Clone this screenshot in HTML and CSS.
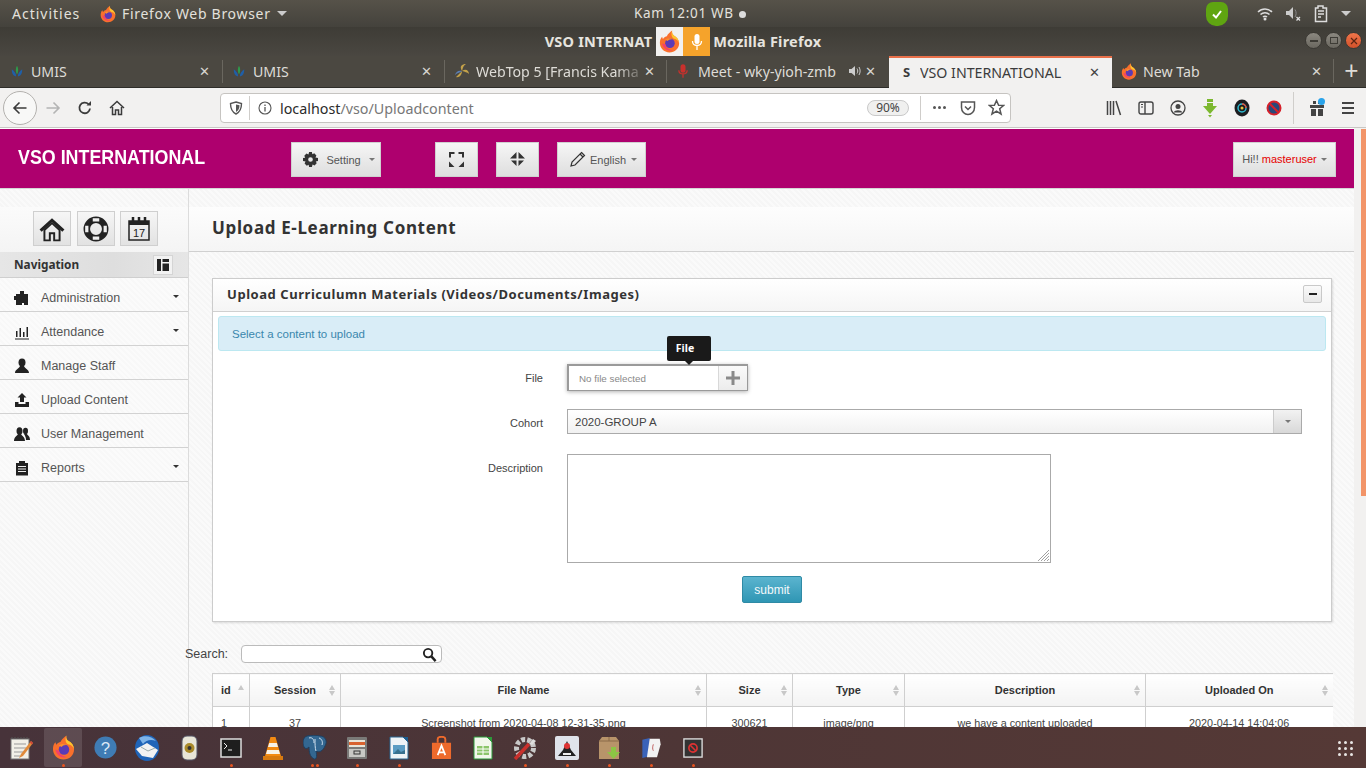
FILE: index.html
```html
<!DOCTYPE html>
<html lang="en">
<head>
    <meta charset="UTF-8">
    <title>VSO INTERNATIONAL - Mozilla Firefox</title>
    <link rel="stylesheet" href="styles.css">
</head>
<body>
    <svg class="defs" width="0" height="0">
        <defs>
            <symbol id="fox" viewBox="0 0 24 26">
                <path d="M12 25.500C5.500 25.500 1 20.500 1 14.500C1 11.500 2 9 3.500 7.500L4.500 10C6 8 7.500 7.500 9 7C10 4.500 12.500 2.500 15 .5C14.500 3 15.500 5 17 6C20.500 8 23 11 23 15C23 21 18 25.500 12 25.500Z" fill="#f9702c"/>
                <path d="M15 .5C14.500 3 15.500 5 17 6C20.500 8 23 11 23 15C22 11.500 19.500 10 16.500 9.500C14 8 13.500 4 15 .5Z" fill="#fcc52e"/>
                <circle cx="12.500" cy="15" r="5.500" fill="#5b3bb5"/>
                <path d="M7 11C9 9 13 8.500 16 10.500C13 10 11 11 10 12.500Z" fill="#fb8f2c"/>
                <path d="M3.500 15C4.500 21 10 24.500 15.500 23C11 22.500 8 20.500 7.500 16.500Z" fill="#f2416b"/>
            </symbol>
            <symbol id="umis" viewBox="0 0 16 16">
                <path d="M2 6C2 11 4 14 7 14C7 11 5 8 2 6Z" fill="#1f5fa8"/>
                <path d="M14 6C14 11 12 14 9 14C9 11 11 8 14 6Z" fill="#1f5fa8"/>
                <path d="M8 2C6 5 6.500 9 8 12C9.500 9 10 5 8 2Z" fill="#2e9a4a"/>
            </symbol>
        </defs>
    </svg>

    <div class="topbar">
        <span class="activities">Activities</span>
        <span class="appmenu">
            <svg width="16" height="18"><use href="#fox"/></svg>
            Firefox Web Browser <i class="tri"></i>
        </span>
        <span class="clock">Kam 12:01 WB <b class="dot"></b></span>
        <span class="tray">
            <span class="shield">
                <svg width="12" height="12" viewBox="0 0 12 12"><path d="M2 6.500L5 9.500L10 3" fill="none" stroke="#fff" stroke-width="2"/></svg>
            </span>
            <svg class="wifi" width="16" height="14" viewBox="0 0 16 14"><path d="M1 5C5 1 11 1 15 5M3.500 7.500C6 5 10 5 12.500 7.500M6 10C7 9 9 9 10 10" fill="none" stroke="#ddd" stroke-width="1.500"/><circle cx="8" cy="12" r="1.500" fill="#ddd"/></svg>
            <svg class="vol" width="16" height="16" viewBox="0 0 16 16"><path d="M1 5H4L8 1V13L4 9H1Z" fill="#ccc"/><path d="M10 3.500C11.500 6 11.500 8.500 10 11" stroke="#888" fill="none"/><path d="M11.500 11L15 14.500M15 11L11.500 14.500" stroke="#ddd" stroke-width="1.300"/></svg>
            <svg class="batt" width="14" height="18" viewBox="0 0 14 18"><path d="M1.500 3H4V1H9V3H12.500V16.500H1.500Z" fill="none" stroke="#ddd" stroke-width="1.500"/><path d="M4 6H10M4 9H10M4 12H7" stroke="#ddd" stroke-width="1.500"/></svg>
            <i class="tri"></i>
        </span>
    </div>

    <div class="titlebar">
        <span class="wintitle">VSO INTERNAT<span class="hidden-part">IONAL - </span>Mozilla Firefox</span>
        <span class="share">
            <span class="share-fox"><svg width="21" height="23"><use href="#fox"/></svg></span>
            <span class="share-mic">
                <svg width="12" height="18" viewBox="0 0 12 18"><rect x="3.500" y="1" width="5" height="10" rx="2.500" fill="#fff"/><path d="M1.500 8C1.500 14 10.500 14 10.500 8M6 13V17" fill="none" stroke="#fff" stroke-width="1.300"/></svg>
            </span>
        </span>
        <span class="winbtns">
            <span class="winbtn"><i class="w-min"></i></span>
            <span class="winbtn"><i class="w-max"></i></span>
            <span class="winbtn close">
                <svg width="8" height="8" viewBox="0 0 8 8"><path d="M1 1L7 7M7 1L1 7" stroke="#5a2412" stroke-width="1.200"/></svg>
            </span>
        </span>
    </div>

    <div class="tabstrip">
        <div class="tab t1"><svg width="14" height="14"><use href="#umis"/></svg><span class="tabname">UMIS</span><span class="tabx">✕</span></div>
        <div class="tab t2"><svg width="14" height="14"><use href="#umis"/></svg><span class="tabname">UMIS</span><span class="tabx">✕</span></div>
        <div class="tab t3">
            <svg width="16" height="16" viewBox="0 0 16 16"><path d="M8 8C5 3 8 1 12 1C9 3 9 5 8 8ZM8 8C12 5 15 8 15 11C13 9 11 9 8 8ZM8 8C8 12 5 15 2 14C4 12 5 11 8 8Z" fill="#c4a24a"/><path d="M8 8C4 7 2 9 1 12C3 10 5 10 8 8Z" fill="#5b7fb5"/></svg>
            <span class="tabname fade">WebTop 5 [Francis Kama</span><span class="tabx">✕</span>
        </div>
        <div class="tab t4">
            <svg width="10" height="16" viewBox="0 0 12 18"><rect x="3" y="1" width="6" height="10" rx="3" fill="#c9302c"/><path d="M1 8C1 14 11 14 11 8M6 13V17" fill="none" stroke="#c9302c" stroke-width="1.500"/></svg>
            <span class="tabname">Meet - wky-yioh-zmb</span>
            <svg class="spk" width="14" height="12" viewBox="0 0 14 12"><path d="M1 4H3.500L7 1V11L3.500 8H1Z" fill="#ccc"/><path d="M9 3.500C10 5 10 7 9 8.500M11 2C12.500 4.500 12.500 7.500 11 10" stroke="#ccc" fill="none"/></svg>
            <span class="tabx">✕</span>
        </div>
        <div class="tab active"><span class="favs">S</span><span class="tabname">VSO INTERNATIONAL</span><span class="tabx">✕</span></div>
        <div class="tab t6"><svg width="16" height="17"><use href="#fox"/></svg><span class="tabname">New Tab</span><span class="tabx">✕</span></div>
        <div class="newtab">+</div>
    </div>

    <div class="navbar">
        <span class="backbtn">
            <svg width="16" height="16" viewBox="0 0 16 16"><path d="M14.500 8H2M7.500 2.500L2 8L7.500 13.500" fill="none" stroke="#3b3b3b" stroke-width="1.600"/></svg>
        </span>
        <svg class="fwd" width="16" height="16" viewBox="0 0 16 16"><path d="M1.500 8H14M8.500 2.500L14 8L8.500 13.500" fill="none" stroke="#b4b4b4" stroke-width="1.600"/></svg>
        <svg class="reload" width="16" height="16" viewBox="0 0 16 16"><path d="M13 8.500A5.300 5.300 0 1 1 11.500 4.200" fill="none" stroke="#3b3b3b" stroke-width="1.800"/><path d="M9.500 5.500H14V1Z" fill="#3b3b3b"/></svg>
        <svg class="homeic" width="16" height="16" viewBox="0 0 16 16"><path d="M1 8L8 1.500L15 8M3.500 7V14.500H6.500V10H9.500V14.500H12.500V7" fill="none" stroke="#3b3b3b" stroke-width="1.500"/></svg>
        <div class="urlbar">
            <svg width="14" height="14" viewBox="0 0 14 14"><path d="M7 1L12.500 2.500C12.500 7.500 11 11 7 13C3 11 1.500 7.500 1.500 2.500Z" fill="none" stroke="#555" stroke-width="1.400"/><path d="M7 3.500L10.500 4.300C10.500 7.500 9.500 9.500 7 11Z" fill="#555"/></svg>
            <i class="urlsep"></i>
            <svg width="14" height="14" viewBox="0 0 14 14"><circle cx="7" cy="7" r="6" fill="none" stroke="#555" stroke-width="1.100"/><path d="M7 6V10.500M7 3.500V5" stroke="#555" stroke-width="1.300"/></svg>
            <span class="url"><em>localhost</em>/vso/Uploadcontent</span>
            <span class="zoombadge">90%</span>
            <i class="urlsep sep2"></i>
            <span class="dots"><b></b><b></b><b></b></span>
            <svg class="pocket" width="16" height="16" viewBox="0 0 16 16"><path d="M1.500 2H14.500V7.500C14.500 11.500 11.500 14.500 8 14.500C4.500 14.500 1.500 11.500 1.500 7.500Z" fill="none" stroke="#555" stroke-width="1.500"/><path d="M5 6.500L8 9.500L11 6.500" fill="none" stroke="#555" stroke-width="1.500"/></svg>
            <svg class="star" width="17" height="17" viewBox="0 0 16 16"><path d="M8 1.500L10 6H14.800L11 9.200L12.300 14.300L8 11.500L3.700 14.300L5 9.200L1.200 6H6Z" fill="none" stroke="#555" stroke-width="1.400"/></svg>
        </div>
        <div class="tools">
            <svg width="16" height="16" viewBox="0 0 16 16"><path d="M1.500 1V15M4.500 1V15M7.500 1V15M10 1L14.500 15" fill="none" stroke="#444" stroke-width="1.500"/></svg>
            <svg width="16" height="16" viewBox="0 0 16 16"><rect x="1" y="2" width="14" height="12" rx="2" fill="none" stroke="#444" stroke-width="1.400"/><path d="M7 2V14" stroke="#444" stroke-width="1.400"/><path d="M3 4.500H5M3 7H5" stroke="#444"/></svg>
            <svg width="16" height="16" viewBox="0 0 16 16"><circle cx="8" cy="8" r="7" fill="none" stroke="#444" stroke-width="1.300"/><circle cx="8" cy="6.500" r="2.500" fill="#444"/><path d="M3.500 12.500C5 9.500 11 9.500 12.500 12.500Z" fill="#444"/></svg>
            <svg width="16" height="20" viewBox="0 0 16 20"><path d="M5 1H11V4H5ZM5 5H11V8H15L8 16L1 8H5Z" fill="#7cb82f"/><path d="M6 17H10L8 19.500Z" fill="#7cb82f"/></svg>
            <svg width="16" height="18" viewBox="0 0 16 18"><ellipse cx="8" cy="9" rx="7.500" ry="8.500" fill="#1d1d20"/><circle cx="8" cy="9" r="4" fill="none" stroke="#2dbbd1" stroke-width="1.500"/><path d="M8 5A4 4 0 0 1 12 9" fill="none" stroke="#e8503a" stroke-width="1.500"/><circle cx="8" cy="9" r="1.500" fill="#e5c83d"/></svg>
            <svg width="16" height="18" viewBox="0 0 16 18"><circle cx="8" cy="9" r="6.500" fill="#28487a" stroke="#d6202a" stroke-width="2"/><path d="M3.500 4.500L12.500 13.500" stroke="#d6202a" stroke-width="2"/></svg>
        </div>
        <i class="toolsep"></i>
        <svg class="gift" width="16" height="18" viewBox="0 0 16 18"><path d="M1 6H15V9H1ZM2 10H7V17H2ZM9 10H14V17H9ZM4 2H7V5H4ZM9 2H12V5H9Z" fill="#444"/></svg>
        <i class="bluedot"></i>
        <span class="hamburger"><b></b><b></b><b></b></span>
    </div>

    <div class="viewport">
        <div class="page">
            <header class="brandbar">
                <span class="brand"><span class="brandtext">VSO INTERNATIONAL</span></span>
                <button class="hbtn setting">
                    <svg width="15" height="15" viewBox="0 0 16 16"><path fill-rule="evenodd" d="M6.500 0H9.500L10 2.300L12 1.400L14.300 3.700L13.300 5.800L16 6.500V9.500L13.700 10L14.600 12L12.300 14.300L10.200 13.300L9.500 16H6.500L6 13.700L4 14.600L1.700 12.300L2.700 10.200L0 9.500V6.500L2.300 6L1.400 4L3.700 1.700L5.800 2.700ZM8 5.500A2.500 2.500 0 1 0 8 10.500A2.500 2.500 0 1 0 8 5.500Z" fill="#333"/></svg>
                    <span>Setting</span><i class="caret"></i>
                </button>
                <button class="hbtn sq first">
                    <svg width="15" height="15" viewBox="0 0 15 15"><path d="M0 0H5.500V2H2V5.500H0ZM15 0V5.500H13V2H9.500V0ZM0 15V9.500L5.500 15ZM15 15H9.500L15 9.500Z" fill="#333"/></svg>
                </button>
                <button class="hbtn sq second">
                    <svg width="15" height="15" viewBox="0 0 15 15"><path d="M6.500 0V6.500H0ZM8.500 0L15 6.500H8.500ZM1 8.500H6.500V14ZM8.500 8.500H14L8.500 14Z" fill="#333"/></svg>
                </button>
                <button class="hbtn lang">
                    <svg width="16" height="16" viewBox="0 0 16 16"><path d="M11.500 1.500L14.500 4.500L5 14L1 15L2 11Z" fill="none" stroke="#333" stroke-width="1.200"/><path d="M10 3L13 6" stroke="#333" stroke-width="1.200"/></svg>
                    <span>English</span><i class="caret"></i>
                </button>
                <button class="hbtn user">Hi!! <span class="uname">masteruser</span><i class="caret"></i></button>
            </header>

            <div class="body-row">
                <aside class="sidebar">
                    <div class="shortcuts">
                        <button class="sbtn">
                            <svg width="26" height="26" viewBox="0 0 24 24"><path d="M12 2L0.500 12.500L2.500 14.500L12 5.500L21.500 14.500L23.500 12.500Z" fill="#222"/><path d="M5 13V22.500H10V16H14V22.500H19V13L12 6.500Z" fill="none" stroke="#222" stroke-width="1.800"/></svg>
                        </button>
                        <button class="sbtn">
                            <svg width="26" height="26" viewBox="0 0 24 24"><circle cx="12" cy="12" r="8.500" fill="none" stroke="#222" stroke-width="6"/><path d="M9 3.500H15M9 20.500H15M3.500 9V15M20.500 9V15" stroke="#eee" stroke-width="3"/></svg>
                        </button>
                        <button class="sbtn">
                            <svg width="24" height="26" viewBox="0 0 24 26"><path d="M2 5H22V24H2Z" fill="none" stroke="#222" stroke-width="1.500"/><path d="M2 5H22V9H2Z" fill="#222"/><path d="M6 1V6M12 1V6M18 1V6" stroke="#222" stroke-width="2.500"/><text x="12" y="21" font-size="11" text-anchor="middle" font-family="Liberation Sans" fill="#222">17</text></svg>
                        </button>
                    </div>
                    <div class="navhead">
                        <span>Navigation</span>
                        <span class="navtoggle">
                            <svg width="14" height="14" viewBox="0 0 14 14"><path d="M1 1H5V13H1ZM6.500 1H13V4H6.500ZM6.500 5.500H13V13H6.500Z" fill="#222"/></svg>
                        </span>
                    </div>
                    <ul class="menu">
                        <li>
                            <svg width="16" height="16" viewBox="0 0 16 16"><path d="M6 1H10V4H14V15H10V13H8V15H2V10H0V6H2V4H6Z" fill="#222"/></svg>
                            Administration<i class="mcaret"></i>
                        </li>
                        <li>
                            <svg width="16" height="16" viewBox="0 0 16 16"><path d="M2 7H3.500V13H2ZM5.500 4H7V13H5.500ZM9 8H10.500V13H9ZM12.500 3H14V13H12.500ZM1 14.500H15V15.500H1Z" fill="#222"/></svg>
                            Attendance<i class="mcaret"></i>
                        </li>
                        <li>
                            <svg width="16" height="16" viewBox="0 0 16 16"><ellipse cx="8" cy="4.500" rx="3.500" ry="4" fill="#222"/><path d="M1 15C1 11.500 5 11 6 8H10C11 11 15 11.500 15 15Z" fill="#222"/></svg>
                            Manage Staff
                        </li>
                        <li>
                            <svg width="16" height="16" viewBox="0 0 16 16"><path d="M8 1L12.500 5.500H10V10H6V5.500H3.500Z" fill="#222"/><path d="M1 10H4.500V12H11.500V10H15V15H1Z" fill="#222"/></svg>
                            Upload Content
                        </li>
                        <li>
                            <svg width="16" height="16" viewBox="0 0 16 16"><ellipse cx="5.500" cy="5" rx="3" ry="3.800" fill="#222"/><path d="M0 15C0 11 3 10 4 8H7C8 10 11 11 11 15Z" fill="#222"/><ellipse cx="11.500" cy="5" rx="2.500" ry="3.300" fill="#222"/><path d="M10 8H13C13.500 9.500 16 10 16 14H12C12 11 11 10 10 8Z" fill="#222"/></svg>
                            User Management
                        </li>
                        <li>
                            <svg width="16" height="16" viewBox="0 0 16 16"><path d="M2 3H5V1H11V3H14V15.500H2Z" fill="#222"/><path d="M4 6.500H12M4 9H12M4 11.500H12" stroke="#eee"/></svg>
                            Reports<i class="mcaret"></i>
                        </li>
                    </ul>
                </aside>

                <main class="content">
                    <div class="pagetitle"><h1>Upload E-Learning Content</h1></div>
                    <section class="box">
                        <div class="boxhead">
                            <h2>Upload Curriculumn Materials (Videos/Documents/Images)</h2>
                            <span class="collapse"><i></i></span>
                        </div>
                        <div class="boxbody">
                            <div class="notice">Select a content to upload</div>
                            <form class="form">
                                <div class="row row-file">
                                    <label>File</label>
                                    <div class="fileinput">
                                        <span class="filename">No file selected</span>
                                        <span class="fileplus"><svg width="14" height="14" viewBox="0 0 14 14"><path d="M5.500 0H8.500V5.500H14V8.500H8.500V14H5.500V8.500H0V5.500H5.500Z" fill="#8a8a8a"/></svg></span>
                                        <span class="tip">File</span>
                                    </div>
                                </div>
                                <div class="row row-cohort">
                                    <label>Cohort</label>
                                    <div class="selectbox">
                                        <span class="selval">2020-GROUP A</span>
                                        <span class="selarrow"><i class="caret"></i></span>
                                    </div>
                                </div>
                                <div class="row row-desc">
                                    <label>Description</label>
                                    <div class="areabox">
                                        <svg class="grip" width="11" height="11" viewBox="0 0 11 11"><path d="M0 11L11 0M3 11L11 3M6 11L11 6M9 11L11 9" stroke="#888" stroke-width=".8"/></svg>
                                    </div>
                                </div>
                                <div class="submitrow"><button type="button" class="submit">submit</button></div>
                            </form>
                        </div>
                    </section>

                    <div class="search">
                        <span>Search:</span>
                        <span class="searchbox">
                            <svg width="15" height="15" viewBox="0 0 16 16"><circle cx="6.500" cy="6.500" r="4.500" fill="none" stroke="#222" stroke-width="2"/><path d="M10 10L14.500 15" stroke="#222" stroke-width="2.600"/></svg>
                        </span>
                    </div>

                    <div class="tablewrap">
                        <table class="grid">
                            <colgroup>
                                <col class="c-id"><col class="c-session"><col class="c-file"><col class="c-size"><col class="c-type"><col class="c-desc"><col class="c-up">
                            </colgroup>
                            <thead>
                                <tr>
                                    <th class="left">id<i class="sort up-only"></i></th>
                                    <th>Session<i class="sort"></i></th>
                                    <th>File Name<i class="sort"></i></th>
                                    <th>Size<i class="sort"></i></th>
                                    <th>Type<i class="sort"></i></th>
                                    <th>Description<i class="sort"></i></th>
                                    <th>Uploaded On<i class="sort"></i></th>
                                </tr>
                            </thead>
                            <tbody>
                                <tr>
                                    <td class="left">1</td>
                                    <td>37</td>
                                    <td>Screenshot from 2020-04-08 12-31-35.png</td>
                                    <td>300621</td>
                                    <td>image/png</td>
                                    <td>we have a content uploaded</td>
                                    <td>2020-04-14 14:04:06</td>
                                </tr>
                            </tbody>
                        </table>
                    </div>
                </main>
            </div>
        </div>
        <div class="scrollbar"><i></i></div>
    </div>

    <div class="dock">
        <span class="app">
            <svg width="24" height="24" viewBox="0 0 24 24"><rect x="2" y="3" width="18" height="20" fill="#f2f0e8" stroke="#777"/><path d="M3 3V1M6 3V1M9 3V1M12 3V1M15 3V1M18 3V1" stroke="#555"/><path d="M5 8H17M5 12H17M5 16H14M5 20H11" stroke="#999"/><path d="M22 5L12 18L10 22L14 20L24 7Z" fill="#e08a3a"/><path d="M22 5L24 7L23 8.500L21 6.500Z" fill="#d0433a"/></svg>
        </span>
        <span class="app on"><svg width="23" height="25"><use href="#fox"/></svg><i class="pip"></i></span>
        <span class="app"><svg width="23" height="23" viewBox="0 0 26 26"><circle cx="13" cy="13" r="12.500" fill="#3f7cb5"/><text x="13" y="20" font-size="19" font-family="Liberation Sans" text-anchor="middle" fill="#dbe8f5">?</text></svg></span>
        <span class="app"><svg width="24" height="26" viewBox="0 0 24 26"><ellipse cx="12" cy="13" rx="12" ry="13" fill="#1f64b8"/><path d="M4 3C9 0 17 1 21 6C16 4 11 5 8 9Z" fill="#7fb4e8"/><path d="M1 14L12 8L23 15L18 23L7 21Z" fill="#f2f2f2"/><path d="M6 12L13 16L20 13" fill="none" stroke="#9aa"/></svg></span>
        <span class="app"><svg width="21" height="26" viewBox="0 0 21 26"><rect x="3" y="1" width="15" height="24" rx="5" fill="#e8e6d8" stroke="#556"/><circle cx="10.500" cy="13" r="5" fill="#a98a2a"/><circle cx="10.500" cy="13" r="2" fill="#333"/></svg></span>
        <span class="app"><svg width="22" height="20" viewBox="0 0 22 20"><rect x="1" y="1" width="20" height="18" fill="#1e1e1e" stroke="#ddd" stroke-width="1.500"/><path d="M4 5L7 8L4 11M8 12H12" fill="none" stroke="#eee"/></svg><i class="pip"></i></span>
        <span class="app"><svg width="20" height="24" viewBox="0 0 20 24"><path d="M7.500 1H12.500L18 20H2Z" fill="#f28a12"/><path d="M6.200 7H13.800L15 11H5ZM4.200 14H15.800L17 18H3Z" fill="#f7f2e8"/><rect x="0" y="20" width="20" height="4" fill="#d77a10"/></svg></span>
        <span class="app"><svg width="24" height="25" viewBox="0 0 24 25"><path d="M4 1C0 2 -1 8 1 12C2 14 4 14 6 12C6 17 7 22 11 24C14 25 14 20 13 16C16 18 20 16 22 11C25 6 22 1 17 1C14 0 8 0 4 1Z" fill="#336791" stroke="#1f3f5f"/><path d="M6 3C9 2 11 4 11 8M12 4C12 9 12 13 13 16M16 3C19 4 20 7 19 10" stroke="#cfdfee" fill="none"/></svg><i class="pip two"></i></span>
        <span class="app"><svg width="20" height="22" viewBox="0 0 20 22"><rect x="0" y="0" width="20" height="22" rx="1" fill="#7a7a78"/><rect x="2" y="3" width="16" height="7" fill="#e8e4d8"/><rect x="2" y="5" width="16" height="3" fill="#d8622f"/><rect x="2" y="12" width="16" height="8" fill="#c8c8c4"/><rect x="7" y="14" width="6" height="3" fill="none" stroke="#333"/></svg><i class="pip"></i></span>
        <span class="app"><svg width="20" height="24" viewBox="0 0 20 24"><path d="M1 1H14L19 6V23H1Z" fill="#eef3f7" stroke="#28648f"/><path d="M14 1L19 1V6Z" fill="#1c5c8e"/><rect x="4" y="9" width="12" height="9" fill="#5b9cc4"/><path d="M4 18L9 13L12 16L16 14V18Z" fill="#37708f"/></svg><i class="pip"></i></span>
        <span class="app"><svg width="21" height="24" viewBox="0 0 22 25"><path d="M1 7H21V24H1Z" fill="#ee6a2c"/><path d="M7 7V3C7 0 15 0 15 3V7" fill="none" stroke="#ee6a2c" stroke-width="2"/><path d="M7 20L11 10L15 20M8.500 17H13.500" fill="none" stroke="#fff" stroke-width="1.800"/></svg></span>
        <span class="app"><svg width="20" height="24" viewBox="0 0 20 24"><path d="M1 1H14L19 6V23H1Z" fill="#f2f7ec" stroke="#2c9a3a"/><path d="M14 1L19 1V6Z" fill="#2c9a3a"/><rect x="4" y="10" width="12" height="9" fill="#8cc56b"/><path d="M4 13H16M4 16H16M10 10V19" stroke="#fff"/></svg></span>
        <span class="app"><svg width="24" height="24" viewBox="0 0 24 24"><circle cx="12" cy="12" r="8.500" fill="none" stroke="#c8c8c8" stroke-width="5" stroke-dasharray="4 2"/><path d="M2 23L16 8" stroke="#c9302c" stroke-width="3.500"/><path d="M16 8L20 3L23 5L19 9Z" fill="#ddd"/></svg><i class="pip"></i></span>
        <span class="app"><svg width="24" height="24" viewBox="0 0 24 24"><rect x="0" y="0" width="24" height="24" rx="2" fill="#dfe3ea"/><path d="M12 5L16 14L21 20H3L8 14Z" fill="#222"/><circle cx="12" cy="10" r="3" fill="#d33"/><path d="M8 18H16" stroke="#eee" stroke-width="2"/></svg><i class="pip"></i></span>
        <span class="app"><svg width="23" height="24" viewBox="0 0 23 24"><path d="M1 5L4 1H18L21 5V23H1Z" fill="#b8946a"/><path d="M1 5H21M11 1V5" stroke="#8a6b48"/><path d="M13 11H18V16H22L15.500 23L9 16H13Z" fill="#8cc544"/></svg><i class="pip"></i></span>
        <span class="app"><svg width="21" height="22" viewBox="0 0 22 24"><path d="M1 3L9 1V21L1 23Z" fill="#3a62b8"/><path d="M9 2H20L21 8L17 22H6Z" fill="#f2f2f2"/><path d="M13 8C12 11 12 13 13 15" stroke="#b55" fill="none"/></svg><i class="pip"></i></span>
        <span class="app"><svg width="20" height="20" viewBox="0 0 22 22"><rect x="1" y="1" width="20" height="20" fill="#333" stroke="#ddd" stroke-width="1.500"/><circle cx="11" cy="11" r="4.500" fill="none" stroke="#d33" stroke-width="1.800"/><path d="M8 8L14 14" stroke="#d33" stroke-width="1.800"/></svg><i class="pip"></i></span>
        <span class="grid9"><b></b><b></b><b></b><b></b><b></b><b></b><b></b><b></b><b></b></span>
    </div>
</body>
</html>
```

FILE: styles.css
```css
* {
    box-sizing: border-box;
}
html, body {
    margin: 0;
    padding: 0;
    height: 100%;
    overflow: hidden;
}
body {
    width: 1366px;
    height: 768px;
    display: flex;
    flex-direction: column;
    font-family: 'Liberation Sans', Arial, sans-serif;
    background: #fff;
    position: relative;
}
.defs {
    position: absolute;
}

/* ---------- ubuntu top bar ---------- */
.topbar {
    height: 27px;
    flex: none;
    display: flex;
    align-items: center;
    position: relative;
    padding-left: 12px;
    background: linear-gradient(#565249, #44423c);
    color: #e3e1dc;
    font: 14px 'Noto Sans', sans-serif;
    letter-spacing: .7px;
}
.activities {
    width: 88px;
    letter-spacing: 1px;
}
.appmenu {
    display: flex;
    align-items: center;
    gap: 6px;
}
.tri {
    display: inline-block;
    width: 0;
    height: 0;
    border-left: 5px solid transparent;
    border-right: 5px solid transparent;
    border-top: 5px solid #ccc;
}
.clock {
    position: absolute;
    left: 634px;
    top: 4px;
    font-size: 13.5px;
    white-space: nowrap;
}
.dot {
    display: inline-block;
    width: 7px;
    height: 7px;
    margin-left: 1px;
    border-radius: 50%;
    background: #ddd;
}
.tray {
    margin-left: auto;
    display: flex;
    align-items: center;
    padding-right: 15px;
}
.shield {
    width: 22px;
    height: 24px;
    display: flex;
    align-items: center;
    justify-content: center;
    margin-right: 29px;
    border-radius: 7px 7px 10px 10px;
    background: #5fa511;
}
.vol {
    margin-left: 12px;
}
.batt {
    margin-left: 13px;
    margin-right: 13px;
}

/* ---------- window title ---------- */
.titlebar {
    height: 29px;
    flex: none;
    position: relative;
    display: flex;
    align-items: center;
    justify-content: center;
    background: linear-gradient(#3e3c36, #4a4741);
    color: #e6e4df;
}
.wintitle {
    font: bold 14.5px 'Noto Sans', sans-serif;
    letter-spacing: .2px;
    position: relative;
    top: -1px;
}
.hidden-part {
    visibility: hidden;
}
.share {
    position: absolute;
    left: 656px;
    top: 0;
    display: flex;
    height: 29px;
}
.share-fox {
    width: 27px;
    background: #f2f1ef;
    display: flex;
    align-items: center;
    justify-content: center;
}
.share-mic {
    width: 27px;
    background: #f5a32b;
    display: flex;
    align-items: center;
    justify-content: center;
}
.winbtns {
    position: absolute;
    right: 4px;
    top: 5px;
    display: flex;
    gap: 3px;
}
.winbtn {
    width: 17px;
    height: 17px;
    border-radius: 50%;
    display: flex;
    align-items: center;
    justify-content: center;
    background: linear-gradient(#8b8880, #6a675f);
    border: 1px solid #3a3833;
}
.winbtn.close {
    background: linear-gradient(#f0754a, #d1512a);
}
.w-min {
    width: 8px;
    height: 2px;
    background: #3e3c36;
}
.w-max {
    width: 8px;
    height: 7px;
    border: 1px solid #3e3c36;
}

/* ---------- tabs ---------- */
.tabstrip {
    height: 32px;
    flex: none;
    display: flex;
    background: #4b4841;
    color: #dedcd7;
    font: 14.2px 'Noto Sans', sans-serif;
    border-bottom: 1px solid #2e2d29;
}
.tab {
    height: 30px;
    flex: none;
    display: flex;
    align-items: center;
    padding-left: 10px;
    padding-right: 10px;
    gap: 7px;
    position: relative;
    width: 222px;
    white-space: nowrap;
}
.tab + .tab::before {
    content: "";
    position: absolute;
    left: 0;
    top: 4px;
    bottom: 3px;
    width: 1px;
    background: #6a675f;
}
.tab.t3 {
    gap: 6px;
    padding-right: 9px;
}
.tab.t4 {
    width: 223px;
    padding-left: 12px;
    padding-right: 11px;
    gap: 10px;
}
.tab.active {
    width: 223px;
    height: 32px;
    padding-left: 14px;
    padding-bottom: 2px;
    gap: 7px;
    background: #f2f1f0;
    color: #3b3b3b;
    border-top: 2px solid #e9704a;
}
.tab.active::before,
.tab.t6::before {
    display: none;
}
.tab.t6 {
    width: 221px;
    padding-left: 9px;
    padding-right: 9px;
    gap: 6px;
}
.tabname {
    flex: 1;
    overflow: hidden;
}
.tabname.fade {
    -webkit-mask-image: linear-gradient(90deg, #000 85%, rgba(0, 0, 0, .2));
}
.tabx {
    font-size: 13px;
    width: 16px;
    flex: none;
    margin-left: -6px;
    text-align: center;
    color: #d8d6d1;
}
.active .tabx {
    color: #444;
}
.favs {
    font-weight: bold;
    font-size: 13px;
    width: 10px;
}
.t4 .tabx {
    margin-left: -7px;
}
.spk {
    margin-right: -3px;
    flex: none;
}
.newtab {
    flex: 1;
    height: 24px;
    margin-top: 3px;
    text-align: center;
    font-size: 25px;
    line-height: 22px;
    padding-left: 3px;
    border-left: 1px solid #6a675f;
}

/* ---------- firefox toolbar ---------- */
.navbar {
    height: 40px;
    flex: none;
    display: flex;
    align-items: center;
    position: relative;
    padding-left: 3px;
    background: #f2f1f0;
    border-bottom: 1px solid #c9c7c4;
}
.backbtn {
    width: 34px;
    height: 34px;
    border-radius: 50%;
    border: 1px solid #b3b1ae;
    background: #f8f8f7;
    display: flex;
    align-items: center;
    justify-content: center;
}
.fwd {
    margin-left: 8px;
}
.reload {
    margin-left: 16px;
}
.homeic {
    margin-left: 16px;
}
.urlbar {
    margin-left: 95px;
    width: 791px;
    height: 30px;
    flex: none;
    display: flex;
    align-items: center;
    padding-left: 8px;
    background: #fff;
    border: 1px solid #c6c4c1;
    border-radius: 4px;
    font: 14.3px 'Noto Sans', sans-serif;
    color: #777;
}
.urlsep {
    width: 1px;
    height: 24px;
    background: #cfcdca;
    margin: 0 8px 0 6px;
}
.url em {
    font-style: normal;
    color: #2b2b2b;
}
.url {
    margin-left: 8px;
    padding-top: 2px;
}
.zoombadge {
    margin-left: auto;
    width: 42px;
    height: 16px;
    line-height: 14px;
    text-align: center;
    font-size: 12px;
    color: #444;
    background: #f0f0ef;
    border: 1px solid #c9c9c9;
    border-radius: 9px;
}
.sep2 {
    margin-left: 11px;
    margin-right: 12px;
}
.dots {
    display: flex;
    gap: 2px;
}
.dots b {
    width: 3px;
    height: 3px;
    border-radius: 50%;
    background: #555;
}
.pocket {
    margin-left: 14px;
}
.star {
    margin-left: 12px;
    margin-right: 5px;
}
.tools {
    display: flex;
    gap: 16px;
    margin-left: 95px;
    align-items: center;
}
.toolsep {
    width: 1px;
    height: 32px;
    background: #d0cecb;
    margin-left: 11px;
}
.gift {
    margin-left: 15px;
}
.bluedot {
    position: absolute;
    left: 1318px;
    top: 10px;
    width: 7px;
    height: 7px;
    border-radius: 50%;
    background: #29a3ea;
}
.hamburger {
    margin-left: 17px;
    display: flex;
    flex-direction: column;
    gap: 3px;
    width: 12px;
}
.hamburger b {
    height: 2px;
    background: #444;
}

/* ---------- page ---------- */
.viewport {
    flex: 1;
    min-height: 0;
    display: flex;
    overflow: hidden;
}
.page {
    width: 1354px;
    flex: none;
}
.scrollbar {
    flex: 1;
    background: #f2f1f0;
    position: relative;
}
.scrollbar i {
    position: absolute;
    right: 0;
    top: 1px;
    width: 5px;
    height: 367px;
    background: #f29468;
}
.brandbar {
    height: 60px;
    margin-top: 1px;
    display: flex;
    align-items: center;
    padding-top: 1px;
    background: #ae006e;
    border-bottom: 1px solid #d6d6d6;
}
.brand {
    width: 291px;
    padding-left: 18px;
    margin-top: -4px;
    font-size: 21px;
    font-weight: bold;
    color: #fff;
    white-space: nowrap;
}
/* the logo font is a condensed one, squeeze it to the same width */
.brandtext {
    display: inline-block;
    transform: scaleX(.85);
    transform-origin: left center;
}
.hbtn {
    height: 35px;
    display: flex;
    align-items: center;
    justify-content: center;
    gap: 7px;
    padding: 0;
    background: linear-gradient(#f6f6f6, #dedede);
    border: 1px solid #d0d0d0;
    font: 11px 'Liberation Sans', sans-serif;
    color: #555;
}
.hbtn span {
    padding-top: 2px;
}
.setting {
    width: 90px;
    padding-left: 6px;
}
.setting span {
    margin-left: 1px;
}
.sq {
    width: 43px;
}
.first {
    margin-left: 54px;
}
.second {
    margin-left: 18px;
}
.lang {
    width: 89px;
    margin-left: 18px;
    gap: 4px;
    padding-left: 4px;
}
.user {
    width: 103px;
    margin-left: auto;
    margin-right: 18px;
    color: #555;
    white-space: pre;
    display: block;
    line-height: 33px;
}
.uname {
    color: #e60000;
}
.caret {
    display: inline-block;
    width: 0;
    height: 0;
    margin-left: 1px;
    vertical-align: middle;
    border-left: 3px solid transparent;
    border-right: 3px solid transparent;
    border-top: 3px solid #777;
}
.user .caret {
    margin-left: 4px;
}
.body-row {
    display: flex;
    height: 540px;
    background: repeating-linear-gradient(45deg, #fafafa 0, #fafafa 2px, #f6f6f6 2px, #f6f6f6 4px);
}

/* sidebar */
.sidebar {
    width: 189px;
    flex: none;
    padding-top: 18px;
    border-right: 1px solid #dcdcdc;
}
.shortcuts {
    height: 45px;
    display: flex;
    justify-content: center;
    gap: 5.500px;
    padding: 4px 0 0 3px;
    background: linear-gradient(#fbfbfb, #f4f4f4);
}
.sbtn {
    width: 38px;
    height: 35px;
    padding: 0;
    display: flex;
    align-items: center;
    justify-content: center;
    background: linear-gradient(#f6f6f6, #e2e2e2);
    border: 1px solid #cfcfcf;
}
.navhead {
    height: 26px;
    display: flex;
    align-items: center;
    justify-content: space-between;
    padding: 0 15px 0 14px;
    background: linear-gradient(90deg, #e6e6e6, #dedede 60%, #e6e6e6);
    border-bottom: 1px solid #cfcfcf;
    font: bold 11.8px 'Noto Sans', sans-serif;
    color: #333;
}
.navhead > span:first-child {
    padding-bottom: 2px;
}
.navtoggle {
    width: 20px;
    height: 20px;
    display: flex;
    align-items: center;
    justify-content: center;
    background: #f2f2f2;
    border: 1px solid #d5d5d5;
}
.menu {
    list-style: none;
    margin: 0;
    padding: 0;
}
.menu li {
    height: 34px;
    display: flex;
    align-items: center;
    gap: 11px;
    padding: 6px 0 0 14px;
    position: relative;
    background: rgba(255, 255, 255, .25);
    border-bottom: 1px solid #d2d2d2;
    font-size: 12.5px;
    color: #555;
}
.mcaret {
    position: absolute;
    right: 9px;
    top: 17px;
    width: 0;
    height: 0;
    border-left: 3.500px solid transparent;
    border-right: 3.500px solid transparent;
    border-top: 3.500px solid #333;
}

/* main */
.content {
    flex: 1;
    min-width: 0;
    padding-top: 18px;
}
.pagetitle {
    height: 45px;
    display: flex;
    align-items: center;
    padding: 0 0 4px 23px;
    background: linear-gradient(#fdfdfd, #f5f5f5);
    border-bottom: 1px solid #d0d0d0;
}
.pagetitle h1 {
    margin: 0;
    font: bold 17px 'Noto Sans', sans-serif;
    letter-spacing: .65px;
    color: #333;
}
.box {
    margin: 26px 22px 0 23px;
    height: 344px;
    background: #fff;
    border: 1px solid #ccc;
    box-shadow: 1px 1px 2px rgba(0, 0, 0, .12);
}
.boxhead {
    height: 33px;
    display: flex;
    align-items: center;
    justify-content: space-between;
    padding: 0 9px 2px 14px;
    background: linear-gradient(#fff, #f5f5f5);
    border-bottom: 1px solid #d0d0d0;
}
.boxhead h2 {
    margin: 0;
    font: bold 13px 'Noto Sans', sans-serif;
    letter-spacing: .55px;
    color: #333;
}
.collapse {
    width: 19px;
    height: 18px;
    display: flex;
    align-items: center;
    justify-content: center;
    background: linear-gradient(#fafafa, #e8e8e8);
    border: 1px solid #c9c9c9;
    border-radius: 2px;
}
.collapse i {
    width: 8px;
    height: 2px;
    background: #222;
}
.boxbody {
    padding: 4px 5px 0;
}
.notice {
    height: 35px;
    line-height: 35px;
    padding-left: 13px;
    background: #d9edf7;
    border: 1px solid #bce8f1;
    border-radius: 3px;
    font-size: 11.5px;
    color: #3a87ad;
}
.row {
    display: flex;
    align-items: flex-start;
}
.row label {
    width: 325px;
    text-align: right;
    font-size: 11px;
    color: #444;
}
.row-file {
    margin-top: 13px;
    height: 27px;
}
.row-file label {
    padding-top: 8px;
}
.fileinput {
    margin-left: 24px;
    width: 181px;
    height: 27px;
    display: flex;
    position: relative;
    border: solid #9a9a9a;
    border-width: 2px 1px 1px 2px;
    box-shadow: 0 1px 4px rgba(0, 0, 0, .3);
    background: #fff;
}
.filename {
    width: 150px;
    padding: 7px 0 0 10px;
    font-size: 9.800px;
    color: #888;
    border-right: 1px solid #d8d8d8;
}
.fileplus {
    flex: 1;
    display: flex;
    align-items: center;
    justify-content: center;
    background: linear-gradient(#fafafa, #ececec);
}
.tip {
    position: absolute;
    left: 98px;
    top: -30px;
    width: 44px;
    height: 25px;
    padding-right: 8px;
    text-align: center;
    background: #1a1a1a;
    border-radius: 2px;
    font: bold 10.5px/24px 'Noto Sans', sans-serif;
    color: #fff;
}
.tip::after {
    content: "";
    position: absolute;
    left: 18px;
    top: 25px;
    border-left: 4px solid transparent;
    border-right: 4px solid transparent;
    border-top: 4px solid #1a1a1a;
}
.row-cohort {
    margin-top: 18px;
}
.row-cohort label {
    padding-top: 8px;
}
.selectbox {
    margin-left: 24px;
    width: 735px;
    height: 25px;
    display: flex;
    align-items: center;
    justify-content: space-between;
    background: linear-gradient(#fff, #f1f1f1);
    border: 1px solid #aaa;
    font-size: 11.5px;
    color: #444;
}
.selval {
    padding-left: 7px;
}
.selarrow {
    width: 28px;
    height: 23px;
    display: flex;
    align-items: center;
    justify-content: center;
    background: linear-gradient(#f2f2f2, #d8d8d8);
    border-left: 1px solid #ccc;
}
.row-desc {
    margin-top: 20px;
}
.row-desc label {
    padding-top: 8px;
}
.areabox {
    margin-left: 24px;
    width: 484px;
    height: 109px;
    position: relative;
    background: #fff;
    border: 1px solid #aaa;
}
.grip {
    position: absolute;
    right: 1px;
    bottom: 1px;
}
.submitrow {
    display: flex;
    padding-left: 524px;
    margin-top: 13px;
}
.submit {
    width: 60px;
    height: 27px;
    padding: 0;
    background: linear-gradient(#5bb4cf, #2f96b4);
    border: 1px solid #2f8aa5;
    border-radius: 2px;
    font: 12px 'Liberation Sans', sans-serif;
    color: #f4f9fb;
}
.search {
    display: flex;
    align-items: center;
    margin: 23px 0 0 -4px;
    font-size: 12.5px;
    color: #444;
    height: 18px;
}
.searchbox {
    margin-left: 13px;
    width: 201px;
    height: 18px;
    display: flex;
    align-items: center;
    justify-content: flex-end;
    padding-right: 4px;
    background: #fff;
    border: 1px solid #bbb;
    border-radius: 4px;
}
.tablewrap {
    margin: 10px 0 0 23px;
    width: 1120px;
}
.grid {
    width: 1120px;
    table-layout: fixed;
    border-collapse: collapse;
    font-size: 10.8px;
    color: #444;
}
.c-id { width: 37px; }
.c-session { width: 91px; }
.c-file { width: 366px; }
.c-size { width: 86px; }
.c-type { width: 112px; }
.c-desc { width: 241px; }
.c-up { width: 187px; }
.grid th {
    height: 33px;
    position: relative;
    text-align: center;
    background: linear-gradient(#fff, #f3f3f3);
    border: 1px solid #cfcfcf;
    color: #333;
    font-size: 11px;
    padding: 0;
}
.grid th.left,
.grid td.left {
    text-align: left;
    padding-left: 8px;
}
.grid td {
    height: 34px;
    padding: 0 0 2px;
    text-align: center;
    background: #fff;
    border: 1px solid #cfcfcf;
}
.grid th:last-child,
.grid td:last-child {
    border-right: 0;
}
.sort {
    position: absolute;
    right: 5px;
    top: 11px;
    width: 0;
    height: 0;
    border-left: 3px solid transparent;
    border-right: 3px solid transparent;
    border-bottom: 5px solid #c8c8c8;
}
.sort::after {
    content: "";
    position: absolute;
    left: -3px;
    top: 6px;
    border-left: 3px solid transparent;
    border-right: 3px solid transparent;
    border-top: 5px solid #c8c8c8;
}
.sort.up-only::after {
    display: none;
}

/* ---------- dock ---------- */
.dock {
    position: absolute;
    left: 0;
    top: 727px;
    width: 1366px;
    height: 41px;
    display: flex;
    align-items: center;
    background: linear-gradient(90deg, #47333a, #4e3636 50%, #553936);
}
.app {
    width: 42px;
    height: 39px;
    display: flex;
    align-items: center;
    justify-content: center;
    position: relative;
    flex: none;
}
.app.on {
    width: 38px;
    margin: 0 2px;
    background: rgba(255, 255, 255, .12);
    border-radius: 2px;
}
.pip {
    position: absolute;
    bottom: 0;
    left: 50%;
    margin-left: -1px;
    width: 3px;
    height: 3px;
    border-radius: 50%;
    background: #e95420;
}
.pip.two {
    box-shadow: 5px 0 0 #e95420;
    margin-left: -4px;
}
.grid9 {
    position: absolute;
    right: 13px;
    top: 14px;
    display: grid;
    grid-template-columns: repeat(3, 3px);
    gap: 3px;
}
.grid9 b {
    width: 3px;
    height: 3px;
    background: #e9e6e4;
    border-radius: 50%;
}
```
